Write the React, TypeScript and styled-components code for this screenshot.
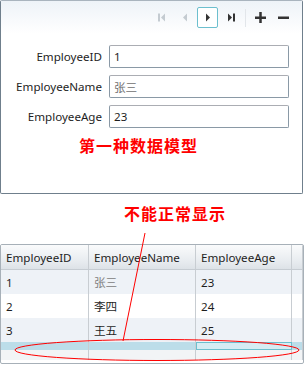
import styled, { createGlobalStyle } from "styled-components";

const GlobalStyle = createGlobalStyle`
  html, body {
    margin: 0;
    padding: 0;
    background: #ffffff;
  }
  body {
    font-family: "Noto Sans", "Noto Sans CJK SC", sans-serif;
    font-size: 11.6px;
    color: #1e1e1e;
  }
`;

const Page = styled.div`
  position: relative;
  width: 304px;
  height: 365px;
  overflow: hidden;
`;

const FormPanel = styled.div`
  box-sizing: border-box;
  width: 303px;
  height: 194px;
  border: 1px solid #6f7f8c;
  border-top-color: #a9b4be;
  border-radius: 2px;
  background: #ffffff;
`;

const Toolbar = styled.div`
  height: 33px;
  display: flex;
  align-items: center;
  justify-content: flex-end;
  padding: 0 7px 0 0;
  background: linear-gradient(#eef3f8, #ffffff);
`;

const NavButton = styled.button<{ $active?: boolean }>`
  box-sizing: border-box;
  width: 21px;
  height: 21px;
  margin: 0 1px;
  padding: 0;
  display: flex;
  align-items: center;
  justify-content: center;
  background: ${(p) => (p.$active ? "#ffffff" : "transparent")};
  border: 1px solid ${(p) => (p.$active ? "#6cbfce" : "transparent")};
  border-radius: 2px;
  color: #2b2b2b;
`;

const Separator = styled.span`
  width: 1px;
  height: 18px;
  margin: 0 3px;
  background: #e2e6ea;
`;

const Fields = styled.div`
  display: grid;
  grid-template-columns: 101px 180px;
  column-gap: 7px;
  row-gap: 7px;
  margin-top: 11px;
  align-items: center;
`;

const Label = styled.label`
  text-align: right;
  color: #1e1e1e;
`;

const Input = styled.div<{ $muted?: boolean }>`
  box-sizing: border-box;
  height: 23px;
  padding: 0 4px;
  display: flex;
  align-items: center;
  border: 1px solid #8a99a6;
  border-top-color: #abadb3;
  border-radius: 2px;
  color: ${(p) => (p.$muted ? "#707070" : "#1e1e1e")};
`;

const Caption = styled.div<{ $indent: number }>`
  margin-left: ${(p) => p.$indent}px;
  color: #ff0000;
  font-weight: bold;
  font-size: 16px;
  line-height: 20px;
  font-family: "Noto Sans CJK SC", sans-serif;
  letter-spacing: 1px;
`;

const FormCaption = styled(Caption)`
  margin-top: 7px;
`;

const NoteCaption = styled(Caption)`
  margin-top: 9px;
`;

const Grid = styled.div`
  box-sizing: border-box;
  margin-top: 21px;
  width: 304px;
  height: 120px;
  border: 1px solid #a7b0b8;
  border-radius: 2px;
  overflow: hidden;
  background: #ffffff;
`;

const Row = styled.div<{ $bg: string; $h: number }>`
  display: grid;
  grid-template-columns: 88px 107px 96px 1fr;
  height: ${(p) => p.$h}px;
  background: ${(p) => p.$bg};
`;

const HeaderRow = styled(Row)`
  background: linear-gradient(#fafbfc, #e7ebef 70%, #dde2e7);
  border-bottom: 1px solid #c6ccd2;
`;

const Cell = styled.div<{ $muted?: boolean; $focus?: boolean }>`
  box-sizing: border-box;
  display: flex;
  align-items: center;
  padding-left: 5px;
  border-right: 1px solid #c8cdd2;
  color: ${(p) => (p.$muted ? "#808080" : "#1e1e1e")};
  ${(p) => (p.$focus ? "border: 1px solid #6cbfce; background: #d6ecf3;" : "")}
`;

const Overlay = styled.svg`
  position: absolute;
  left: 0;
  top: 0;
  pointer-events: none;
`;

const rows = [
  { id: "1", name: "张三", age: "23", bg: "#eef2f7", muted: true },
  { id: "2", name: "李四", age: "24", bg: "#ffffff" },
  { id: "3", name: "王五", age: "25", bg: "#eef2f7" },
];

const Tri = ({ dir, color }: { dir: "l" | "r"; color: string }) => (
  <svg width="6" height="9" viewBox="0 0 6 9">
    <path d={dir === "r" ? "M1 0.5 L5 4.5 L1 8.5 Z" : "M5 0.5 L1 4.5 L5 8.5 Z"} fill={color} />
  </svg>
);

export default function App() {
  return (
    <Page>
      <GlobalStyle />
      <FormPanel>
        <Toolbar>
          <NavButton>
            <svg width="8" height="9" viewBox="0 0 8 9">
              <rect x="0" y="0.5" width="2" height="8" fill="#c4cbd1" />
              <path d="M7 0.5 L3 4.5 L7 8.5 Z" fill="#c4cbd1" />
            </svg>
          </NavButton>
          <NavButton>
            <Tri dir="l" color="#c4cbd1" />
          </NavButton>
          <NavButton $active>
            <Tri dir="r" color="#333333" />
          </NavButton>
          <NavButton>
            <svg width="8" height="9" viewBox="0 0 8 9">
              <path d="M1 0.5 L5 4.5 L1 8.5 Z" fill="#333333" />
              <rect x="6" y="0.5" width="2" height="8" fill="#333333" />
            </svg>
          </NavButton>
          <Separator />
          <NavButton>
            <svg width="11" height="11" viewBox="0 0 11 11">
              <rect x="0" y="4.5" width="11" height="2.5" fill="#333333" />
              <rect x="4.25" y="0" width="2.5" height="11" fill="#333333" />
            </svg>
          </NavButton>
          <NavButton>
            <svg width="11" height="11" viewBox="0 0 11 11">
              <rect x="0" y="4.5" width="11" height="2.5" fill="#333333" />
            </svg>
          </NavButton>
        </Toolbar>
        <Fields>
          <Label>EmployeeID</Label>
          <Input>1</Input>
          <Label>EmployeeName</Label>
          <Input $muted>张三</Input>
          <Label>EmployeeAge</Label>
          <Input>23</Input>
        </Fields>
        <FormCaption $indent={78}>第一种数据模型</FormCaption>
      </FormPanel>
      <NoteCaption $indent={124}>不能正常显示</NoteCaption>
      <Grid>
        <HeaderRow $bg="" $h={24}>
          <Cell>EmployeeID</Cell>
          <Cell>EmployeeName</Cell>
          <Cell>EmployeeAge</Cell>
          <Cell />
        </HeaderRow>
        {rows.map((r) => (
          <Row key={r.id} $bg={r.bg} $h={24}>
            <Cell>{r.id}</Cell>
            <Cell $muted={r.muted}>{r.name}</Cell>
            <Cell>{r.age}</Cell>
            <Cell />
          </Row>
        ))}
        <Row $bg="#bcdde9" $h={8}>
          <Cell />
          <Cell />
          <Cell $focus />
          <Cell />
        </Row>
        <Row $bg="#f2f4f6" $h={10}>
          <Cell />
          <Cell />
          <Cell />
          <Cell />
        </Row>
      </Grid>
      <Overlay width="304" height="365">
        <line x1="145" y1="233" x2="123" y2="341" stroke="#ff0000" strokeWidth="1" />
        <ellipse cx="157" cy="350" rx="142" ry="10.5" fill="none" stroke="#ff0000" strokeWidth="1" />
      </Overlay>
    </Page>
  );
}
